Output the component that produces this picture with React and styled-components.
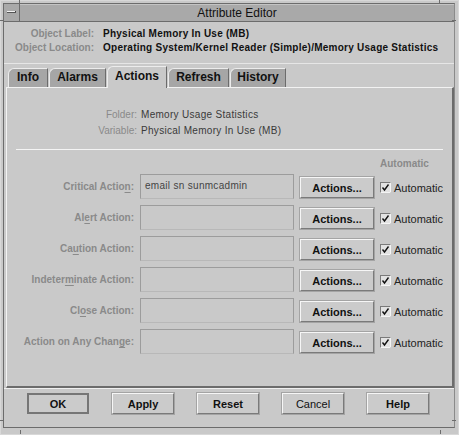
import React from 'react';
import styled, { createGlobalStyle } from 'styled-components';

const GlobalStyle = createGlobalStyle`
  html, body {
    margin: 0;
    padding: 0;
    background: #c9c9c9;
  }
  body {
    font-family: "Liberation Sans", Arial, sans-serif;
  }
`;

// window frame
const Frame = styled.div`
  position: relative;
  width: 459px;
  height: 435px;
  box-sizing: border-box;
  background: #c9c9c9;
  border: 1px solid #d8d8d8;
  padding: 2px 3px 6px 2px;
`;

const Notch = styled.span`
  position: absolute;
  background: #6c6c6c;
  width: ${(p) => (p.$v ? '1px' : '4px')};
  height: ${(p) => (p.$v ? '4px' : '1px')};
`;

const Inner = styled.div`
  height: 100%;
  box-sizing: border-box;
  border: 1px solid #6c6c6c;
  border-right-color: #8a8a8a;
  display: flex;
  flex-direction: column;
`;

const TitleBar = styled.div`
  display: flex;
  height: 17px;
  background: #a9a9a9;
  border-bottom: 1px solid #6c6c6c;
`;

const MenuButton = styled.div`
  width: 15px;
  border-right: 1px solid #6c6c6c;
  display: flex;
  align-items: center;
  justify-content: center;
  span {
    display: block;
    width: 8px;
    height: 1px;
    background: #f2f2f2;
    border-right: 1px solid #444;
    box-shadow: 0 1px 0 #555;
    margin-top: -2px;
  }
`;

const Title = styled.div`
  flex: 1;
  text-align: center;
  font-size: 12px;
  line-height: 17px;
  color: #111;
  border-top: 1px solid #c4c4c4;
  box-sizing: border-box;
`;

const Header = styled.div`
  display: grid;
  grid-template-columns: 90px 1fr;
  column-gap: 9px;
  margin-top: 5px;
  font-size: 10px;
  font-weight: bold;
  line-height: 14px;
  white-space: nowrap;
`;

const HeadLabel = styled.div`
  text-align: right;
  color: #8a8a8a;
`;

const HeadValue = styled.div`
  color: #111;
  letter-spacing: 0.25px;
`;

const Rule = styled.div`
  height: 0;
  border-top: 1px solid ${(p) => p.$color || '#e6e6e6'};
  margin: ${(p) => p.$margin || '0'};
`;

const TabRow = styled.div`
  display: flex;
  align-items: flex-end;
  height: 21px;
  margin: 2px 0 0 4px;
  position: relative;
  z-index: 1;
`;

const Tab = styled.div`
  box-sizing: border-box;
  width: ${(p) => p.$w}px;
  height: ${(p) => (p.$active ? 22 : 19)}px;
  margin-bottom: ${(p) => (p.$active ? -1 : 0)}px;
  margin-right: 1px;
  background: ${(p) => (p.$active ? '#c9c9c9' : '#a6a6a6')};
  border-top: 1px solid #ececec;
  border-left: 1px solid #ececec;
  border-right: 1px solid #6c6c6c;
  border-top-left-radius: 6px 6px;
  font-size: 12px;
  font-weight: bold;
  color: #111;
  text-align: center;
  line-height: ${(p) => (p.$active ? 19 : 17)}px;
`;

const Panel = styled.div`
  box-sizing: border-box;
  height: 301px;
  margin: 0 0 0 2px;
  background: #c9c9c9;
  border-top: 1px solid #f2f2f2;
  border-left: 1px solid #f2f2f2;
  border-right: 2px solid #6c6c6c;
  border-bottom: 2px solid #6c6c6c;
  padding-top: 19px;
`;

const InfoGrid = styled.div`
  display: grid;
  grid-template-columns: 130px 1fr;
  column-gap: 4px;
  font-size: 10px;
  line-height: 16px;
`;

const InfoLabel = styled.div`
  text-align: right;
  color: #8a8a8a;
`;

const InfoValue = styled.div`
  color: #3a3a3a;
  letter-spacing: 0.3px;
`;

const ActionGrid = styled.div`
  display: grid;
  grid-template-columns: 127px 154px 74px 1fr;
  grid-template-rows: 22px repeat(6, 31px);
  column-gap: 6px;
  align-items: center;
`;

const AutoHead = styled.div`
  grid-column: 4;
  font-size: 10px;
  font-weight: bold;
  color: #8a8a8a;
  line-height: 14px;
  height: 14px;
  margin-top: 7px;
  align-self: start;
`;

const ActionLabel = styled.div`
  grid-column: 1;
  text-align: right;
  font-size: 10px;
  font-weight: bold;
  color: #8a8a8a;
  white-space: nowrap;
  margin-top: -2px;
  u {
    text-decoration-thickness: 1px;
    text-underline-offset: 2px;
  }
`;

const Field = styled.div`
  box-sizing: border-box;
  height: 25px;
  border: 1px solid #9c9c9c;
  border-bottom-color: #b8b8b8;
  font-size: 10px;
  color: #444;
  padding: 5px 0 0 4px;
  margin-top: -3px;
  letter-spacing: 0.3px;
`;

const PushButton = styled.div`
  box-sizing: border-box;
  width: ${(p) => p.$w || 74}px;
  height: 21px;
  background: #cbcbcb;
  border: ${(p) => (p.$default ? 2 : 1)}px solid;
  border-color: ${(p) =>
    p.$default ? '#767676' : '#f6f6f6 #7a7a7a #7a7a7a #f6f6f6'};
  box-shadow: ${(p) => (p.$default ? 'none' : '0 0 0 1px #a4a4a4')};
  font-size: 11px;
  font-weight: ${(p) => (p.$light ? 'normal' : 'bold')};
  color: #111;
  display: flex;
  align-items: center;
  justify-content: center;
`;

const Toggle = styled.div`
  display: flex;
  align-items: center;
  gap: 3px;
  font-size: 11px;
  color: #222;
`;

const ButtonBar = styled.div`
  display: flex;
  gap: 23px;
  padding: 4px 0 0 23px;
  border-top: 1px solid #efefef;
`;

const CheckBox = () => (
  <svg width="11" height="11" viewBox="0 0 11 11">
    <rect x="0.5" y="0.5" width="10" height="10" fill="#e2e2e2" stroke="#7a7a7a" />
    <path d="M0.5 10.5 H10.5 V0.5" fill="none" stroke="#f4f4f4" />
    <path d="M2.5 5.5 L4.5 8 L8.5 2.5" fill="none" stroke="#111" strokeWidth="1.4" />
  </svg>
);

const rows = [
  { pre: 'Critical Actio', key: 'n', post: ':', value: 'email sn sunmcadmin' },
  { pre: 'Al', key: 'e', post: 'rt Action:' },
  { pre: 'Ca', key: 'u', post: 'tion Action:' },
  { pre: 'Indeter', key: 'm', post: 'inate Action:' },
  { pre: 'Cl', key: 'o', post: 'se Action:' },
  { pre: 'Action on Any Chan', key: 'g', post: 'e:' },
];

const tabs = [
  { name: 'Info', w: 40 },
  { name: 'Alarms', w: 57 },
  { name: 'Actions', w: 60, active: true },
  { name: 'Refresh', w: 61 },
  { name: 'History', w: 56 },
];

const notches = [
  { left: 18, top: -1, v: true },
  { left: 438, top: -1, v: true },
  { left: -1, top: 19 },
  { left: 451, top: 19 },
  { left: -1, top: 419 },
  { left: 451, top: 419 },
  { left: 19, top: 429, v: true },
  { left: 439, top: 429, v: true },
];

const App = () => (
  <>
    <GlobalStyle />
    <Frame>
      {notches.map((n, i) => (
        <Notch key={i} $v={n.v} style={{ left: n.left, top: n.top }} />
      ))}
      <Inner>
        <TitleBar>
          <MenuButton>
            <span />
          </MenuButton>
          <Title>Attribute Editor</Title>
        </TitleBar>

        <Header>
          <HeadLabel>Object Label:</HeadLabel>
          <HeadValue>Physical Memory In Use (MB)</HeadValue>
          <HeadLabel>Object Location:</HeadLabel>
          <HeadValue>Operating System/Kernel Reader (Simple)/Memory Usage Statistics</HeadValue>
        </Header>

        <Rule $margin="8px 0 0 0" />

        <TabRow>
          {tabs.map((t) => (
            <Tab key={t.name} $w={t.w} $active={t.active}>
              {t.name}
            </Tab>
          ))}
        </TabRow>

        <Panel>
          <InfoGrid>
            <InfoLabel>Folder:</InfoLabel>
            <InfoValue>Memory Usage Statistics</InfoValue>
            <InfoLabel>Variable:</InfoLabel>
            <InfoValue>Physical Memory In Use (MB)</InfoValue>
          </InfoGrid>

          <Rule $color="#f4f4f4" $margin="10px 9px 0 9px" />

          <ActionGrid>
            <AutoHead>Automatic</AutoHead>
            {rows.map((r) => (
              <React.Fragment key={r.pre}>
                <ActionLabel>
                  {r.pre}
                  <u>{r.key}</u>
                  {r.post}
                </ActionLabel>
                <Field>{r.value}</Field>
                <PushButton>Actions...</PushButton>
                <Toggle>
                  <CheckBox />
                  Automatic
                </Toggle>
              </React.Fragment>
            ))}
          </ActionGrid>
        </Panel>

        <ButtonBar>
          <PushButton $w={62} $default>OK</PushButton>
          <PushButton $w={62}>Apply</PushButton>
          <PushButton $w={62}>Reset</PushButton>
          <PushButton $w={62} $light>Cancel</PushButton>
          <PushButton $w={62}>Help</PushButton>
        </ButtonBar>
      </Inner>
    </Frame>
  </>
);

export default App;
